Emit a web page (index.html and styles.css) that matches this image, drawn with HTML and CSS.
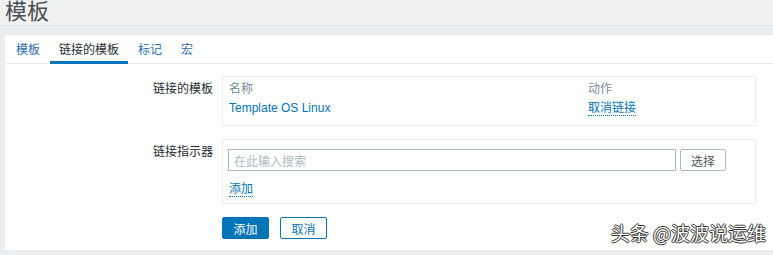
FILE: index.html
```html
<!DOCTYPE html>
<html lang="zh-CN">
<head>
<meta charset="utf-8">
<title>模板</title>
<link rel="stylesheet" href="styles.css">
</head>
<body>
<header class="page-header">
  <h1 class="page-title">模板</h1>
</header>
<main class="panel">
  <nav class="tabs">
    <a class="tab">模板</a>
    <a class="tab tab-active">链接的模板</a>
    <a class="tab">标记</a>
    <a class="tab">宏</a>
  </nav>
  <form class="form">
    <div class="form-row">
      <div class="form-label">链接的模板</div>
      <div class="form-field box box-table">
        <div class="tbl-row tbl-head">
          <span class="col-name">名称</span>
          <span class="col-action">动作</span>
        </div>
        <div class="tbl-row tbl-body">
          <span class="col-name"><a class="link">Template OS Linux</a></span>
          <span class="col-action"><a class="link dotted">取消链接</a></span>
        </div>
      </div>
    </div>
    <div class="form-row">
      <div class="form-label">链接指示器</div>
      <div class="form-field box box-search">
        <div class="search-line">
          <input class="search-input" type="text" placeholder="在此输入搜索">
          <button type="button" class="btn-grey">选择</button>
        </div>
        <div class="add-line"><a class="link dotted">添加</a></div>
      </div>
    </div>
    <div class="form-row">
      <div class="form-label"></div>
      <div class="form-actions">
        <button type="button" class="btn-primary">添加</button>
        <button type="button" class="btn-alt">取消</button>
      </div>
    </div>
  </form>
  <div class="watermark">头条 @波波说运维</div>
</main>
</body>
</html>
```

FILE: styles.css
```css
* { box-sizing: border-box; }
html, body { margin: 0; padding: 0; }
body {
  background: #ebeef0;
  font-family: "Noto Sans CJK SC", "Liberation Sans", sans-serif;
  font-size: 12px;
  color: #1f2c33;
  width: 773px;
  height: 255px;
  overflow: hidden;
}
.page-header {
  height: 26px;
  background: #f0f1f2;
  border-bottom: 1px solid #e2e4e6;
  padding-left: 5px;
  overflow: hidden;
}
.page-title {
  margin: -3px 0 0 0;
  font-size: 22px;
  line-height: 24px;
  font-weight: normal;
  color: #4a4f52;
}
.panel {
  position: relative;
  margin: 9px 0 0 5px;
  height: 215px;
  background: #ffffff;
}
.tabs {
  display: flex;
  height: 29px;
  padding-left: 2px;
  border-bottom: 1px solid #ebeef0;
}
.tab {
  display: block;
  padding: 2px 9px 0 9px;
  margin-right: 1px;
  height: 29px;
  line-height: 24px;
  color: #2b6cab;
  border-bottom: 3px solid transparent;
  margin-bottom: -1px;
}
.tab-active {
  color: #1f2c33;
  border-bottom-color: #0275b8;
}
.form {
  padding-top: 12px;
  display: flex;
  flex-direction: column;
  gap: 13px;
}
.form-row {
  display: flex;
  gap: 9px;
}
.form-label {
  width: 208px;
  text-align: right;
  padding-top: 4px;
  line-height: 16px;
  color: #1f2c33;
}
.box {
  width: 534px;
  border: 1px solid #ebeef0;
}
.box-table {
  padding: 3px 6px 9px 6px;
}
.tbl-row {
  display: flex;
  line-height: 16px;
}
.tbl-body { margin-top: 3px; }
.tbl-head { color: #768d99; }
.col-name { width: 359px; }
.link {
  color: #0275b8;
  font-family: "Liberation Sans", "Noto Sans CJK SC", sans-serif;
}
.dotted {
  font-family: "Noto Sans CJK SC", "Liberation Sans", sans-serif;
  border-bottom: 1px dotted #0275b8;
}
.box-search {
  padding: 9px 5px 7px 5px;
}
.search-line {
  display: flex;
  gap: 4px;
}
.search-input {
  width: 448px;
  height: 22px;
  border: 1px solid #acbbc2;
  padding: 0 5px;
  font-family: "Noto Sans CJK SC", "Liberation Sans", sans-serif;
  font-size: 12px;
  color: #1f2c33;
  background: #fff;
  outline: none;
}
.search-input::placeholder { color: #acbbc2; }
.btn-grey {
  width: 46px;
  height: 22px;
  border: 1px solid #acbbc2;
  border-radius: 2px;
  background: #fff;
  color: #4f5a60;
  font-family: "Noto Sans CJK SC", sans-serif;
  font-size: 12px;
  padding: 0;
}
.add-line {
  margin-top: 9px;
  line-height: 16px;
  padding-left: 1px;
}
.form-actions {
  display: flex;
  gap: 11px;
}
.btn-primary, .btn-alt {
  width: 47px;
  height: 22px;
  border-radius: 2px;
  font-family: "Noto Sans CJK SC", sans-serif;
  font-size: 12px;
  padding: 0;
}
.btn-primary {
  background: #0275b8;
  border: 1px solid #0275b8;
  color: #ffffff;
}
.btn-alt {
  background: #ffffff;
  border: 1px solid #0275b8;
  color: #0275b8;
}
.watermark {
  position: absolute;
  right: 7px;
  top: 186px;
  font-size: 19px;
  line-height: 24px;
  color: #ffffff;
  font-family: "Noto Sans CJK SC", sans-serif;
  text-shadow: 1px 0 0 #333, -1px 0 0 #333, 0 1px 0 #333, 0 -1px 0 #333;
}
```
